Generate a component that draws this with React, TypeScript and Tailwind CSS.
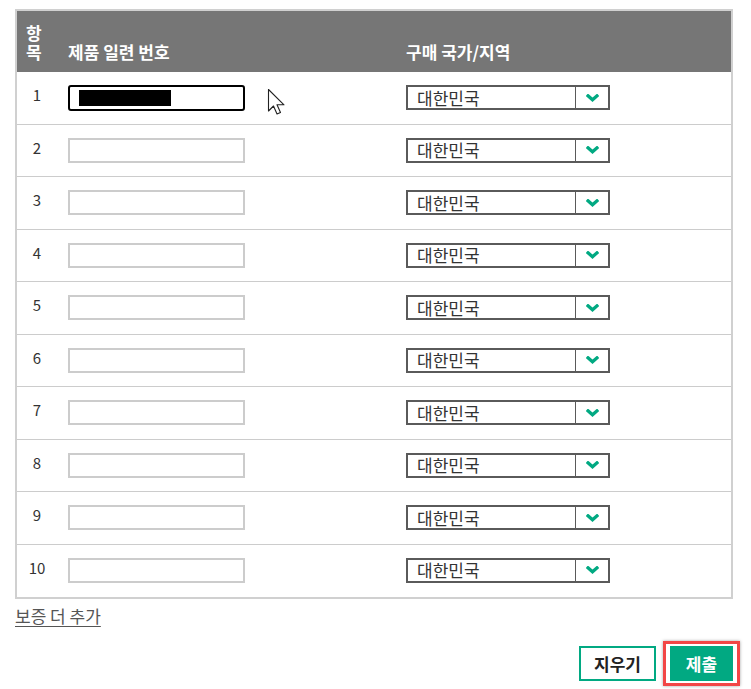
import { useState } from 'react';

const rows = [1, 2, 3, 4, 5, 6, 7, 8, 9, 10];

function Chevron() {
  return (
    <svg width="13" height="8" viewBox="0 0 13 8" fill="none">
      <path d="M2 1.8 L6.5 5.8 L11 1.8" stroke="#01a982" strokeWidth="3.2" strokeLinecap="square" />
    </svg>
  );
}

function CountrySelect() {
  return (
    <div className="flex h-[25px] w-[204px] items-stretch border-2 border-[#5a5a5a] bg-white">
      <div className="flex flex-1 items-center pl-[9px] text-[17px] leading-[20px] text-[#333]">대한민국</div>
      <div className="flex w-[33px] items-center justify-center border-l border-[#5a5a5a]">
        <Chevron />
      </div>
    </div>
  );
}

function Cursor() {
  return (
    <svg width="20" height="30" viewBox="0 0 20 30" className="absolute left-[267px] top-[88px]">
      <path
        d="M1.5 1.5 L1.5 23 L6.5 18 L10 26 L13.5 24.5 L10 16.8 L17 16.8 Z"
        fill="white"
        stroke="#222"
        strokeWidth="1.1"
        strokeLinejoin="round"
      />
    </svg>
  );
}

export default function App() {
  const [serials, setSerials] = useState<string[]>(rows.map(() => ''));

  return (
    <div
      className="relative h-[689px] w-[751px] bg-white pt-[9px]"
      style={{ fontFamily: '"Noto Sans CJK KR", "Noto Sans", sans-serif' }}
    >
      <div className="ml-[15px] w-[718px] border-2 border-[#d0d0d0]">
        <div className="flex h-[61px] items-end bg-[#767676] pb-[11px] text-[17px] font-bold leading-[19px] text-white">
          <div className="w-[40px] pl-[9px]">
            <div>항</div>
            <div>목</div>
          </div>
          <div className="w-[349px] pl-[11px]">제품 일련 번호</div>
          <div className="flex-1">구매 국가/지역</div>
        </div>
        {rows.map((n, i) => (
          <div
            key={n}
            className={`flex h-[52.5px] items-start pt-[13px] ${i < rows.length - 1 ? 'border-b border-[#cccccc]' : ''}`}
          >
            <div className="w-[40px] text-center text-[15px] leading-[20px] text-[#333]">{n}</div>
            <div className="w-[349px] pl-[11px]">
              {i === 0 ? (
                <div className="relative h-[26px] w-[177px] rounded-[3px] border-2 border-black bg-white">
                  <div className="absolute left-[9px] top-[3px] h-[16px] w-[92px] bg-black" />
                </div>
              ) : (
                <input
                  value={serials[i]}
                  onChange={(e) => {
                    const next = [...serials];
                    next[i] = e.target.value;
                    setSerials(next);
                  }}
                  className="block h-[25px] w-[177px] border-2 border-[#cccccc] bg-white px-2 text-[14px] outline-none"
                />
              )}
            </div>
            <CountrySelect />
          </div>
        ))}
      </div>

      <div className="ml-[15px] mt-[6px] leading-[22px]">
        <a href="#" className="text-[17px] text-[#555] underline underline-offset-[3px]">
          보증 더 추가
        </a>
      </div>

      <div className="mr-[11px] mt-[14px] flex items-center justify-end gap-[7px]">
        <button className="h-[35px] w-[77px] border-2 border-[#01a982] bg-white text-[17px] font-bold text-[#222]">
          지우기
        </button>
        <div className="border-[3px] border-[#f24646] px-[4px] py-[2px] shadow-[0_0_3px_rgba(0,0,0,0.35)]">
          <button className="h-[35px] w-[63px] bg-[#01a982] text-[17px] font-bold text-white">제출</button>
        </div>
      </div>

      <Cursor />
    </div>
  );
}
